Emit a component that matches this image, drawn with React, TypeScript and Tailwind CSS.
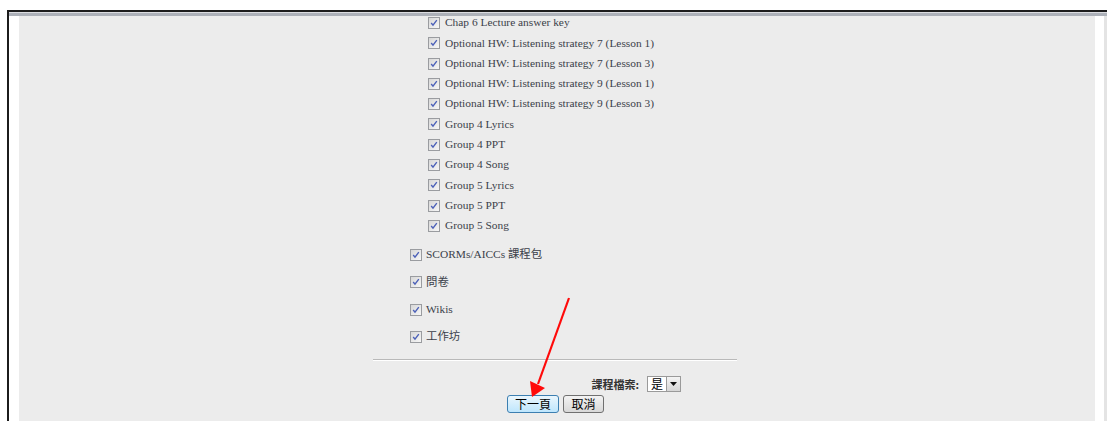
import React from 'react';

const subItems = [
  'Chap 6 Lecture answer key',
  'Optional HW: Listening strategy 7 (Lesson 1)',
  'Optional HW: Listening strategy 7 (Lesson 3)',
  'Optional HW: Listening strategy 9 (Lesson 1)',
  'Optional HW: Listening strategy 9 (Lesson 3)',
  'Group 4 Lyrics',
  'Group 4 PPT',
  'Group 4 Song',
  'Group 5 Lyrics',
  'Group 5 PPT',
  'Group 5 Song',
];

const sections = ['SCORMs/AICCs 課程包', '問卷', 'Wikis', '工作坊'];

const serif = "font-['Liberation_Serif','Noto_Sans_CJK_TC',serif]";
const cjk = "font-['Noto_Sans_CJK_TC','Liberation_Sans',sans-serif]";

function CheckBox() {
  return (
    <svg width="12" height="12" viewBox="0 0 12 12" className="shrink-0">
      <defs>
        <linearGradient id="cbfill" x1="0" y1="0" x2="1" y2="1">
          <stop offset="0" stopColor="#d6d6d6" />
          <stop offset="1" stopColor="#f8f8f8" />
        </linearGradient>
      </defs>
      <rect x="0.5" y="0.5" width="11" height="11" fill="url(#cbfill)" stroke="#9a9ca0" />
      <path d="M3.2 6 L5 8.2 L8.8 3.2" fill="none" stroke="#4b60b8" strokeWidth="1.4" />
    </svg>
  );
}

export default function App() {
  return (
    <div className="relative w-[1107px] h-[421px] bg-white overflow-hidden">
      <div className="mt-[10px] ml-[7px] h-[411px] border-l-2 border-t-2 border-[#1c1c1c] flex flex-col">
        <div className="h-px bg-[#dcdde1]" />
        <div className="h-[3px] bg-[#adb1b9]" />
        <div className="flex flex-1">
          <div className="w-[10px] bg-white" />
          <div className="w-[1076px] bg-[#ececec]">
            <div className="ml-[354px] w-[364px] pt-px">
              <div className="flex flex-col gap-[8.3px] pl-[55px]">
                {subItems.map((s) => (
                  <div key={s} className="flex items-center h-[12px] gap-[5px]">
                    <CheckBox />
                    <span className={`${serif} text-[11.4px] leading-none text-[#3b3f4a] whitespace-nowrap`}>{s}</span>
                  </div>
                ))}
              </div>
              <div className="flex flex-col gap-[15.3px] pl-[37px] mt-[17px]">
                {sections.map((s) => (
                  <div key={s} className="flex items-center h-[12px] gap-[4px]">
                    <CheckBox />
                    <span className={`${serif} text-[11.4px] leading-none text-[#3b3f4a] whitespace-nowrap`}>{s}</span>
                  </div>
                ))}
              </div>
              <div className="mt-[16px] border-t border-[#b9b9b9] border-b border-b-white" />
              <div className="mt-[15px] flex items-center justify-end pr-[56px] gap-[8px]">
                <span className={`${cjk} text-[11px] font-bold text-[#333]`}>課程檔案:</span>
                <div className="flex h-[16px] w-[34px] border border-[#9a9a9a] bg-white">
                  <span className={`${cjk} text-[12px] leading-[14px] text-black pl-[3px] flex-1`}>是</span>
                  <div className="w-[14px] bg-gradient-to-b from-[#f4f4f4] to-[#d6d6d6] border-l border-[#9a9a9a] flex items-center justify-center">
                    <svg width="7" height="4" viewBox="0 0 7 4"><path d="M0 0 H7 L3.5 4 Z" fill="#111" /></svg>
                  </div>
                </div>
              </div>
              <div className="mt-[3px] flex justify-center gap-[4px] pl-[1px]">
                <button className={`${cjk} h-[18px] w-[52px] rounded-[3px] border border-[#3c7fb1] bg-gradient-to-b from-[#eaf6fd] to-[#bee6fd] text-[12px] leading-none text-black`}>
                  下一頁
                </button>
                <button className={`${cjk} h-[18px] w-[41px] rounded-[3px] border border-[#707070] bg-gradient-to-b from-[#f3f3f3] to-[#d8d8d8] text-[12px] leading-none text-black`}>
                  取消
                </button>
              </div>
            </div>
          </div>
          <div className="w-[9px] bg-white" />
          <div className="flex-1 bg-[#e4e4e4]" />
        </div>
      </div>
      {/* red pointer arrow */}
      <svg className="absolute left-0 top-0 pointer-events-none" width="1107" height="421">
        <line x1="569" y1="298" x2="538" y2="384" stroke="#ff0a0a" strokeWidth="2.2" />
        <polygon points="530,381 545,388 532,397" fill="#ff0a0a" />
      </svg>
    </div>
  );
}
